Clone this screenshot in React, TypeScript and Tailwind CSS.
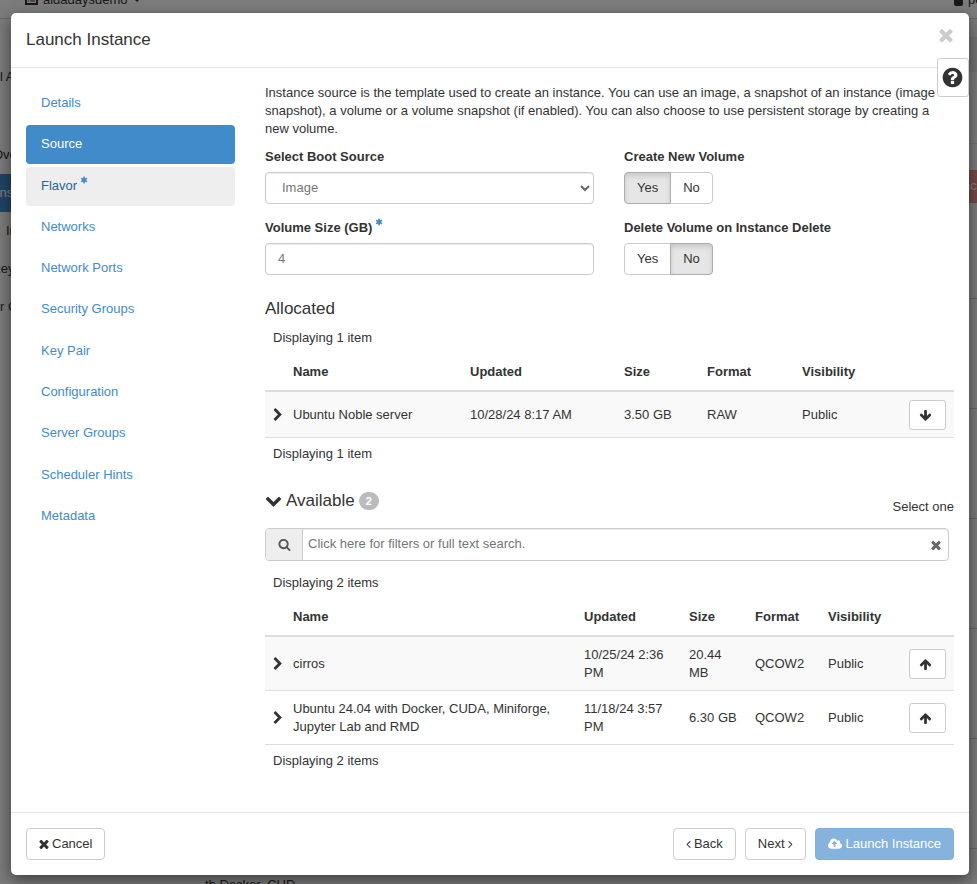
import { ReactNode } from 'react'

const paths = {
  times: 'M1490 1322q0 40-28 68l-136 136q-28 28-68 28t-68-28l-294-294-294 294q-28 28-68 28t-68-28l-136-136q-28-28-28-68t28-68l294-294-294-294q-28-28-28-68t28-68l136-136q28-28 68-28t68 28l294 294 294-294q28-28 68-28t68 28l136 136q28 28 28 68t-28 68l-294 294 294 294q28 28 28 68z',
  chevronRight: 'M1363 877l-742 742q-19 19-45 19t-45-19l-166-166q-19-19-19-45t19-45l531-531-531-531q-19-19-19-45t19-45l166-166q19-19 45-19t45 19l742 742q19 19 19 45t-19 45z',
  chevronDown: 'M1683 808l-742 741q-19 19-45 19t-45-19l-742-741q-19-19-19-45.5t19-45.5l166-165q19-19 45-19t45 19l531 531 531-531q19-19 45-19t45 19l166 165q19 19 19 45.5t-19 45.5z',
  angleLeft: 'M1203 544q0 13-10 23l-393 393 393 393q10 10 10 23t-10 23l-50 50q-10 10-23 10t-23-10l-466-466q-10-10-10-23t10-23l466-466q10-10 23-10t23 10l50 50q10 10 10 23z',
  angleRight: 'M1171 960q0 13-10 23l-466 466q-10 10-23 10t-23-10l-50-50q-10-10-10-23t10-23l393-393-393-393q-10-10-10-23t10-23l50-50q10-10 23-10t23 10l466 466q10 10 10 23z',
  search: 'M1216 832q0-185-131.5-316.5t-316.5-131.5-316.5 131.5-131.5 316.5 131.5 316.5 316.5 131.5 316.5-131.5 131.5-316.5zm512 832q0 52-38 90t-90 38q-54 0-90-38l-343-342q-179 124-399 124-143 0-273.5-55.5t-225-150-150-225-55.5-273.5 55.5-273.5 150-225 225-150 273.5-55.5 273.5 55.5 225 150 150 225 55.5 273.5q0 220-124 399l343 343q37 37 37 90z',
  question: 'M1024 1376v-192q0-14-9-23t-23-9h-192q-14 0-23 9t-9 23v192q0 14 9 23t23 9h192q14 0 23-9t9-23zm256-672q0-88-55.5-163t-138.5-116-170-41q-243 0-371 213-15 24 8 42l132 100q7 6 19 6 16 0 25-12 53-68 86-92 34-24 86-24 48 0 85.5 26t37.5 59q0 38-20 61t-68 45q-63 28-115.5 86.5t-52.5 125.5v36q0 14 9 23t23 9h192q14 0 23-9t9-23q0-19 21.5-49.5t54.5-49.5q32-18 49-28.5t46-35 44.5-48 28-60.5 12.5-81zm384 192q0 209-103 385.5t-279.5 279.5-385.5 103-385.5-103-279.5-279.5-103-385.5 103-385.5 279.5-279.5 385.5-103 385.5 103 279.5 279.5 103 385.5z',
  arrowDown: 'M1675 832q0 53-37 90l-651 652q-39 37-91 37-53 0-90-37l-651-652q-38-36-38-90 0-53 38-91l74-75q39-37 91-37 53 0 90 37l294 294v-704q0-52 38-90t90-38h128q52 0 90 38t38 90v704l294-294q37-37 90-37 52 0 91 37l75 75q37 39 37 91z',
  cloudUpload: 'M1216 864q0-14-9-23l-352-352q-9-9-23-9t-23 9l-351 351q-10 12-10 24 0 14 9 23t23 9h224v352q0 13 9.5 22.5t22.5 9.5h192q13 0 22.5-9.5t9.5-22.5v-352h224q13 0 22.5-9.5t9.5-22.5zm640 288q0 159-112.5 271.5t-271.5 112.5h-1088q-185 0-316.5-131.5t-131.5-316.5q0-130 70-240t188-165q-2-30-2-43 0-212 150-362t362-150q156 0 285.5 87t188.5 231q71-62 166-62 106 0 181 75t75 181q0 76-41 138 130 31 213.5 135.5t83.5 238.5z',
  asterisk: 'M1566 1046q46 26 59.5 77.5t-12.5 97.5l-64 110q-26 46-77.5 59.5t-97.5-12.5l-266-153v307q0 52-38 90t-90 38h-128q-52 0-90-38t-38-90v-307l-266 153q-46 26-97.5 12.5t-77.5-59.5l-64-110q-26-46-12.5-97.5t59.5-77.5l266-154-266-154q-46-26-59.5-77.5t12.5-97.5l64-110q26-46 77.5-59.5t97.5 12.5l266 153v-307q0-52 38-90t90-38h128q52 0 90 38t38 90v307l266-153q46-26 97.5-12.5t77.5 59.5l64 110q26 46 12.5 97.5t-59.5 77.5l-266 154z',
}

interface IconProps {
  name: keyof typeof paths
  className: string
  viewBox?: string
}

function Icon({ name, className, viewBox = '0 0 1792 1792' }: IconProps) {
  return (
    <svg viewBox={viewBox} className={`shrink-0 fill-current ${className}`} aria-hidden="true">
      <path d={paths[name]} />
    </svg>
  )
}

const steps = [
  { label: 'Details' },
  { label: 'Source', active: true },
  { label: 'Flavor', hover: true, required: true },
  { label: 'Networks' },
  { label: 'Network Ports' },
  { label: 'Security Groups' },
  { label: 'Key Pair' },
  { label: 'Configuration' },
  { label: 'Server Groups' },
  { label: 'Scheduler Hints' },
  { label: 'Metadata' },
]

interface Image {
  name: string
  updated: string
  size: string
  format: string
  visibility: string
}

const allocated: Image[] = [
  { name: 'Ubuntu Noble server', updated: '10/28/24 8:17 AM', size: '3.50 GB', format: 'RAW', visibility: 'Public' },
]

const available: Image[] = [
  { name: 'cirros', updated: '10/25/24 2:36 PM', size: '20.44 MB', format: 'QCOW2', visibility: 'Public' },
  {
    name: 'Ubuntu 24.04 with Docker, CUDA, Miniforge, Jupyter Lab and RMD',
    updated: '11/18/24 3:57 PM',
    size: '6.30 GB',
    format: 'QCOW2',
    visibility: 'Public',
  },
]

function StepNav() {
  return (
    <nav className="w-[239px] shrink-0 px-[15px]">
      <ul className="flex h-[452px] flex-col justify-between">
        {steps.map((step) => (
          <li key={step.label}>
            <a
              href="#"
              className={`flex rounded px-[15px] pt-[9px] pb-[11px] leading-[19px] ${
                step.active ? 'bg-[#428bca] text-white' : step.hover ? 'bg-[#eeeeee] text-[#2a6496]' : 'text-[#428bca]'
              }`}
            >
              {step.label}
              {step.required && <Icon name="asterisk" className="ml-[3px] size-2 text-[#428bca]" />}
            </a>
          </li>
        ))}
      </ul>
    </nav>
  )
}

function YesNo({ label, value }: { label: string; value: 'Yes' | 'No' }) {
  const on = 'relative border-[#adadad] bg-[#e6e6e6] shadow-[inset_0_3px_5px_rgba(0,0,0,0.125)]'
  const off = 'border-[#cccccc] bg-white'
  return (
    <div role="group" aria-label={label}>
      <div className="font-bold leading-[19px]">{label}</div>
      <div className="mt-[6px] flex">
        <button type="button" aria-pressed={value === 'Yes'} className={`h-8 rounded-l border px-3 pb-px ${value === 'Yes' ? on : off}`}>
          Yes
        </button>
        <button type="button" aria-pressed={value === 'No'} className={`-ml-px h-8 rounded-r border px-3 pb-px ${value === 'No' ? on : off}`}>
          No
        </button>
      </div>
    </div>
  )
}

interface ImageTableProps {
  images: Image[]
  arrow: 'up' | 'down'
  cols: ReactNode
  rowClass?: string
}

function ImageTable({ images, arrow, cols, rowClass = '' }: ImageTableProps) {
  const count = `Displaying ${images.length} ${images.length === 1 ? 'item' : 'items'}`
  return (
    <div>
      <div className="px-2 leading-[18px]">{count}</div>
      <table className="mt-2 w-full table-fixed border-separate border-spacing-0 text-left leading-[18px]">
        {cols}
        <thead>
          <tr className="[&>th]:border-b-2 [&>th]:border-[#dddddd] [&>th]:px-2 [&>th]:pt-2 [&>th]:pb-[9px]">
            <th />
            <th>Name</th>
            <th>Updated</th>
            <th>Size</th>
            <th>Format</th>
            <th>Visibility</th>
            <th />
          </tr>
        </thead>
        <tbody>
          {images.map((image) => (
            <tr key={image.name} className={`odd:bg-[#f9f9f9] [&>td]:border-b [&>td]:border-[#dddddd] [&>td]:px-2 [&>td]:pt-2 [&>td]:pb-[7px] ${rowClass}`}>
              <td>
                <button type="button" aria-label="Show details" className="flex pb-px">
                  <Icon name="chevronRight" viewBox="300 0 1082 1792" className="h-[14px] w-[9px]" />
                </button>
              </td>
              <td>{image.name}</td>
              <td>{image.updated}</td>
              <td>{image.size}</td>
              <td>{image.format}</td>
              <td>{image.visibility}</td>
              <td>
                <button
                  type="button"
                  aria-label={arrow === 'up' ? 'Allocate' : 'Remove'}
                  className="flex h-[30px] w-[37px] items-center justify-center rounded-[3px] border border-[#cccccc] bg-white pr-1"
                >
                  <Icon name="arrowDown" className={`size-[13px] ${arrow === 'up' ? 'rotate-180' : ''}`} />
                </button>
              </td>
            </tr>
          ))}
        </tbody>
      </table>
      <div className="mt-[7px] px-2 leading-[18px]">{count}</div>
    </div>
  )
}

function SourceStep() {
  return (
    <section className="min-w-0 flex-1 px-[15px]">
      <p className="leading-[18px]">
        Instance source is the template used to create an instance. You can use an image, a snapshot of an instance
        (image snapshot), a volume or a volume snapshot (if enabled). You can also choose to use persistent storage by
        creating a new volume.
      </p>
      <div className="mt-[9px] grid grid-cols-2 gap-x-[30px] gap-y-[14px] pr-px">
        <div>
          <label htmlFor="boot-source" className="block font-bold leading-[19px]">
            Select Boot Source
          </label>
          <div className="relative mt-[6px]">
            <select
              id="boot-source"
              className="block h-8 w-full appearance-none rounded border border-[#cccccc] bg-white px-4 pb-px text-[#777777] shadow-[inset_0_1px_1px_rgba(0,0,0,0.075)]"
            >
              <option>Image</option>
            </select>
            <svg viewBox="0 0 10 7" className="pointer-events-none absolute top-[13px] right-1 h-[7px] w-[10px]" aria-hidden="true">
              <path d="M1 1l4 4 4-4" fill="none" stroke="#666666" strokeWidth="2" />
            </svg>
          </div>
        </div>
        <YesNo label="Create New Volume" value="Yes" />
        <div>
          <label htmlFor="volume-size" className="flex font-bold leading-[19px]">
            Volume Size (GB)
            <Icon name="asterisk" className="ml-[3px] size-2 text-[#428bca]" />
          </label>
          <input
            id="volume-size"
            defaultValue="4"
            className="mt-[6px] block h-8 w-full rounded border border-[#cccccc] bg-white px-3 pb-px text-[#777777] shadow-[inset_0_1px_1px_rgba(0,0,0,0.075)]"
          />
        </div>
        <YesNo label="Delete Volume on Instance Delete" value="No" />
      </div>

      <h4 className="mt-6 mb-[10px] text-[17px] leading-5">Allocated</h4>
      <ImageTable
        images={allocated}
        arrow="down"
        cols={
          <colgroup>
            <col className="w-5" />
            <col />
            <col className="w-[154px]" />
            <col className="w-[83px]" />
            <col className="w-[95px]" />
            <col className="w-[107px]" />
            <col className="w-[53px]" />
          </colgroup>
        }
      />

      <div className="mt-7 flex justify-between">
        <h4 className="flex h-5 items-center text-[17px] leading-5">
          <Icon name="chevronDown" viewBox="0 -80 1792 1792" className="mr-1 size-[17px] self-start" />
          Available
          <span className="ml-1 rounded-full bg-[#bbbbbb] px-[7px] text-[11px] font-bold leading-[18px] text-white">2</span>
        </h4>
        <span className="mt-[7px] leading-[18px]">Select one</span>
      </div>
      <div className="mt-3 mr-[5px] flex h-[33px] rounded border border-[#cccccc] shadow-[inset_0_1px_1px_rgba(0,0,0,0.075)]">
        <span className="flex w-[37px] items-center justify-center rounded-l-[3px] border-r border-[#cccccc] bg-[#eeeeee] text-[#555555]">
          <Icon name="search" className="size-[13px]" />
        </span>
        <input
          aria-label="Search images"
          placeholder="Click here for filters or full text search."
          className="min-w-0 flex-1 bg-transparent px-[5px] pb-[2px] placeholder:text-[#757575] focus:outline-none"
        />
        <button type="button" aria-label="Clear search" className="px-[5px] text-[#666666]">
          <Icon name="times" className="size-[14px]" />
        </button>
      </div>
      <div className="mt-[13px]">
        <ImageTable
          images={available}
          arrow="up"
          rowClass="[&>td]:h-[54px]"
          cols={
            <colgroup>
              <col className="w-5" />
              <col />
              <col className="w-[105px]" />
              <col className="w-[66px]" />
              <col className="w-[73px]" />
              <col className="w-[81px]" />
              <col className="w-[53px]" />
            </colgroup>
          }
        />
      </div>
    </section>
  )
}

// Dashboard page that stays visible round the edges of the dialog
function Backdrop() {
  return (
    <div className="absolute inset-0 overflow-hidden bg-[#f6f6f6]" aria-hidden="true">
      <div className="flex h-[19px] items-start justify-between border-b border-[#cccccc] bg-[#f8f8f8]">
        <div className="-mt-[9px] ml-[25px] flex items-center gap-[5px] leading-[18px]">
          <svg viewBox="0 0 13 11" className="h-[11px] w-[13px]">
            <path d="M1 1h11v8H1z" fill="none" stroke="#333333" strokeWidth="2" />
            <path d="M3 4h1M5 4h5M3 6h1M5 6h5" fill="none" stroke="#333333" />
          </svg>
          aidadaysdemo
          <span className="border-x-4 border-t-4 border-x-transparent border-t-[#333333]" />
        </div>
        <div className="-mt-[9px] flex w-[23px] items-center gap-[5px] leading-[18px]">
          <span className="h-3 w-[9px] shrink-0 rounded-[2px] bg-[#333333]" />
          pe
        </div>
      </div>
      <div className="flex justify-between">
        <div className="w-3 overflow-hidden whitespace-nowrap pt-[39px] leading-[38px]">
          <div>l A</div>
          <div className="-ml-[7px] mt-[40px]">Ove</div>
          <div className="bg-[#428bca] text-white">
            <span className="-ml-1">Inst</span>
          </div>
          <div className="ml-[6px]">In</div>
          <div className="-ml-[8px]">Key</div>
          <div>r G</div>
        </div>
        <div className="w-[30px]">
          <div className="mt-[18px] h-[35px] bg-[#e7e7e7]" />
          <div className="mt-[71px] border-t border-[#dddddd]" />
          <div className="mt-[26px] h-[33px] overflow-hidden bg-[#e8928f] pl-4 leading-[32px] text-white">nc</div>
          <div className="mt-[95px] h-[111px] border-y border-[#cccccc]" />
          <div className="h-[110px] border-b border-[#cccccc]" />
          <div className="h-[110px] border-b border-[#cccccc]" />
          <div className="h-[110px] border-b border-[#cccccc]" />
          <div className="h-[110px] border-b border-[#cccccc]" />
        </div>
      </div>
      <div className="absolute bottom-0 left-0 h-2 overflow-hidden pl-[205px] leading-[18px]">th Docker, CUD</div>
      <div className="absolute inset-0 bg-black/50" />
    </div>
  )
}

export default function App() {
  const footerButton = 'flex h-8 items-center rounded border px-3 pb-px'
  return (
    <div className="relative min-h-screen pt-[13px] pr-2 pb-2 pl-[11px] font-['Liberation_Sans',Arial,sans-serif] text-[13px] text-[#333333]">
      <Backdrop />
      <div role="dialog" aria-label="Launch Instance" className="relative rounded-[5px] bg-white shadow-[0_5px_15px_rgba(0,0,0,0.5)]">
        <header className="flex items-start justify-between border-b border-[#e5e5e5] px-[15px] py-[17px]">
          <h3 className="text-[17px] leading-5">Launch Instance</h3>
          <button type="button" aria-label="Close" className="-mt-[5px] -mr-[2px] text-[#cccccc]">
            <Icon name="times" className="size-5" />
          </button>
        </header>
        <button
          type="button"
          aria-label="Help"
          className="absolute top-[45px] right-0 flex h-[39px] w-8 items-center justify-center rounded-[3px] border border-[#cccccc] bg-white pr-px pb-px"
        >
          <Icon name="question" className="size-[23px]" />
        </button>
        <div className="flex min-h-[744px] pt-4">
          <StepNav />
          <SourceStep />
        </div>
        <footer className="flex justify-between border-t border-[#e5e5e5] p-[15px]">
          <button type="button" className={`${footerButton} gap-[3px] border-[#cccccc] bg-white`}>
            <Icon name="times" viewBox="250 0 1292 1792" className="h-[14px] w-[10px]" />
            Cancel
          </button>
          <div className="flex gap-[9px]">
            <button type="button" className={`${footerButton} gap-[3px] border-[#cccccc] bg-white`}>
              <Icon name="angleLeft" viewBox="550 0 700 1792" className="h-[14px] w-[5px]" />
              Back
            </button>
            <button type="button" className={`${footerButton} gap-[3px] border-[#cccccc] bg-white`}>
              Next
              <Icon name="angleRight" viewBox="550 0 700 1792" className="h-[14px] w-[5px]" />
            </button>
            <button type="button" disabled className={`${footerButton} gap-1 border-[#7fafda] bg-[#86b3dd] text-white`}>
              <Icon name="cloudUpload" viewBox="-64 0 1920 1792" className="h-[14px] w-[14px]" />
              Launch Instance
            </button>
          </div>
        </footer>
      </div>
    </div>
  )
}
